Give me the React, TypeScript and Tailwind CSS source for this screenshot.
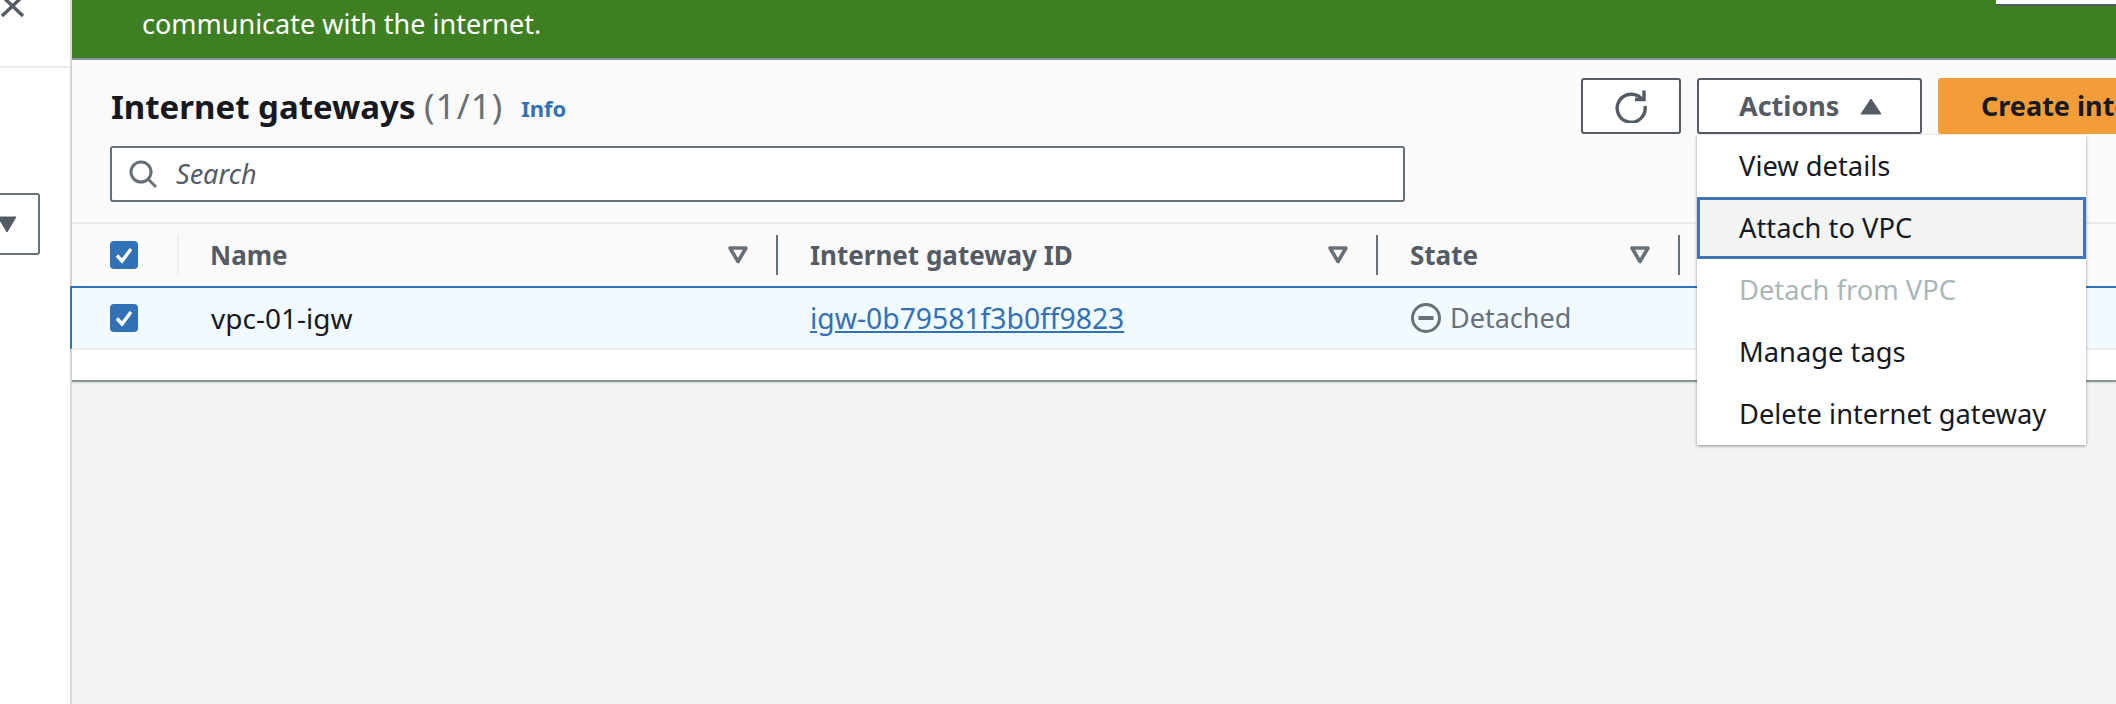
import React from "react";

const FONT = "font-['Noto_Sans','Open_Sans',sans-serif]";

function Check() {
  return (
    <div className="flex h-[28px] w-[28px] shrink-0 items-center justify-center rounded-[4px] bg-[#3371b6]">
      <svg width="22" height="22" viewBox="0 0 22 22" fill="none">
        <path d="M4 11.5 L9 17 L18 5" stroke="#fff" strokeWidth="3.4" strokeLinejoin="miter" />
      </svg>
    </div>
  );
}

function SortIcon() {
  return (
    <svg width="20" height="18" viewBox="0 0 20 18" fill="none" className="shrink-0">
      <path d="M2 2 H18 L10 15.5 Z" stroke="#687078" strokeWidth="3.6" strokeLinejoin="round" />
    </svg>
  );
}

function Divider() {
  return <div className="h-[40px] w-[2px] shrink-0 bg-[#687078]" />;
}

function HeadCell({ label, className, pad }: { label: string; className: string; pad: string }) {
  return (
    <div className={`flex shrink-0 items-center ${className}`}>
      <span className={`flex-1 text-[26px] font-bold text-[#545b64] ${pad}`}>{label}</span>
      <SortIcon />
      <div className="w-[28px] shrink-0" />
      <Divider />
    </div>
  );
}

function MenuItem({ label, active, disabled }: { label: string; active?: boolean; disabled?: boolean }) {
  const tone = active
    ? "border-[3px] border-[#3f74b5] bg-[#f2f3f3] pl-[39px] text-[#16191f]"
    : disabled
      ? "pl-[42px] text-[#aab7b8]"
      : "pl-[42px] text-[#16191f]";
  return <div className={`flex h-[62px] items-center text-[27.3px] ${tone}`}>{label}</div>;
}

export default function App() {
  return (
    <div className={`flex h-[704px] w-[2116px] overflow-hidden bg-white ${FONT}`}>
      <aside className="w-[70px] shrink-0 overflow-hidden bg-white">
        <div className="h-[68px] border-b-2 border-[#eaeded]">
          <svg width="28" height="18" viewBox="0 0 28 18" fill="none" className="ml-[-1px]">
            <path d="M3 -4 L24 16 M24 -4 L3 16" stroke="#545b64" strokeWidth="3.4" />
          </svg>
        </div>
        <div className="ml-[-60px] mt-[125px] flex h-[62px] w-[100px] items-center justify-end rounded-[3px] border-2 border-[#687078] bg-white pr-[22px]">
          <svg width="20" height="17" viewBox="0 0 20 17" className="mr-[-1px]">
            <path d="M1 1 H19 L10 16 Z" fill="#545b64" stroke="#545b64" strokeLinejoin="round" />
          </svg>
        </div>
      </aside>

      <main className="relative flex min-w-0 flex-1 flex-col border-l-2 border-[#d5dbdb] bg-[#f2f3f3]">
        <div className="flex h-[58px] items-start justify-between bg-[#3f7f24] pl-[70px]">
          <p className="pt-[4px] text-[27px] leading-[40px] text-white">communicate with the internet.</p>
          <div className="h-[6px] w-[120px] border-b-2 border-[#545b64] bg-white" />
        </div>

        <section className="border-y-2 border-t-[#879596] border-b-[#879596] bg-[#fafafa] shadow-[0_1px_2px_rgba(0,0,0,0.12)]">
          <div className="flex h-[162px] items-start pl-[38px]">
            <div className="w-[1295px] shrink-0 pt-[18px]">
              <div className="flex h-[68px] items-center pb-[12px] pl-[1px]">
                <h1 className="text-[33px] font-bold leading-[40px] whitespace-nowrap text-[#16191f]">
                  Internet gateways <span className="text-[35px] font-normal tracking-[1px] text-[#687078]">(1/1)</span>
                </h1>
                <span className="ml-[18px] mt-[4px] text-[22px] font-bold text-[#3371b6]">Info</span>
              </div>
              <div className="flex h-[56px] items-center rounded-[3px] border-2 border-[#687078] bg-white pl-[16px]">
                <svg width="30" height="30" viewBox="0 0 30 30" fill="none">
                  <circle cx="13" cy="13" r="10" stroke="#687078" strokeWidth="3" />
                  <path d="M20 20 L28 28" stroke="#687078" strokeWidth="3" />
                </svg>
                <span className="ml-[18px] text-[27px] italic text-[#545b64]">Search</span>
              </div>
            </div>
            <div className="flex min-w-0 flex-1 items-start pl-[176px] pt-[18px]">
              <button className="flex h-[56px] w-[100px] shrink-0 items-center justify-center rounded-[3px] border-2 border-[#545b64] bg-white">
                <svg width="34" height="34" viewBox="0 0 34 34" fill="none">
                  <path d="M28.5 11 A14 14 0 1 0 31 17" stroke="#545b64" strokeWidth="3.4" />
                  <path d="M21 10.5 H30 V1.5" stroke="#545b64" strokeWidth="3.4" />
                </svg>
              </button>
              <button className="ml-[16px] flex h-[56px] w-[225px] shrink-0 items-center justify-start rounded-[3px] border-2 border-[#545b64] bg-white pl-[40px] text-[27px] font-bold text-[#545b64]">
                Actions
                <svg width="22" height="17" viewBox="0 0 22 17" className="ml-[21px]">
                  <path d="M11 1 L21 16 H1 Z" fill="#545b64" stroke="#545b64" strokeLinejoin="round" />
                </svg>
              </button>
              <button className="ml-[16px] flex h-[56px] w-[400px] shrink-0 items-center rounded-[3px] bg-[#f39d38] pl-[43px] text-[27px] font-bold whitespace-nowrap text-[#16191f]">
                Create internet gateway
              </button>
            </div>
          </div>

          <div className="flex h-[64px] items-center border-t-2 border-[#eaeded] bg-[#fafafa] pl-[38px]">
            <Check />
            <div className="ml-[39px] h-[40px] w-[2px] shrink-0 bg-[#eaeded]" />
            <HeadCell label="Name" className="w-[599px]" pad="pl-[31px]" />
            <HeadCell label="Internet gateway ID" className="w-[600px]" pad="pl-[32px]" />
            <HeadCell label="State" className="w-[302px]" pad="pl-[32px]" />
          </div>

          <div className="ml-[-2px] flex h-[64px] items-center border-y-2 border-l-2 border-t-[#3371b6] border-b-[#eaeded] border-l-[#3371b6] bg-[#f1faff] pl-[38px]">
            <Check />
            <span className="ml-[73px] w-[599px] shrink-0 text-[28px] text-[#16191f]">vpc-01-igw</span>
            <a className="w-[600px] shrink-0 text-[28.3px] text-[#3371b6] underline">igw-0b79581f3b0ff9823</a>
            <div className="flex items-center">
              <svg width="32" height="32" viewBox="0 0 32 32" fill="none">
                <circle cx="16" cy="16" r="13.5" stroke="#687078" strokeWidth="3" />
                <path d="M8.5 16 H23.5" stroke="#687078" strokeWidth="4" />
              </svg>
              <span className="ml-[8px] text-[27px] text-[#687078]">Detached</span>
            </div>
          </div>
          <div className="h-[30px] bg-white" />
        </section>

        <div className="absolute left-[1625px] top-[135px] w-[389px] bg-white shadow-[0_1px_3px_rgba(0,0,0,0.4)]">
          <MenuItem label="View details" />
          <MenuItem label="Attach to VPC" active />
          <MenuItem label="Detach from VPC" disabled />
          <MenuItem label="Manage tags" />
          <MenuItem label="Delete internet gateway" />
        </div>
      </main>
    </div>
  );
}
